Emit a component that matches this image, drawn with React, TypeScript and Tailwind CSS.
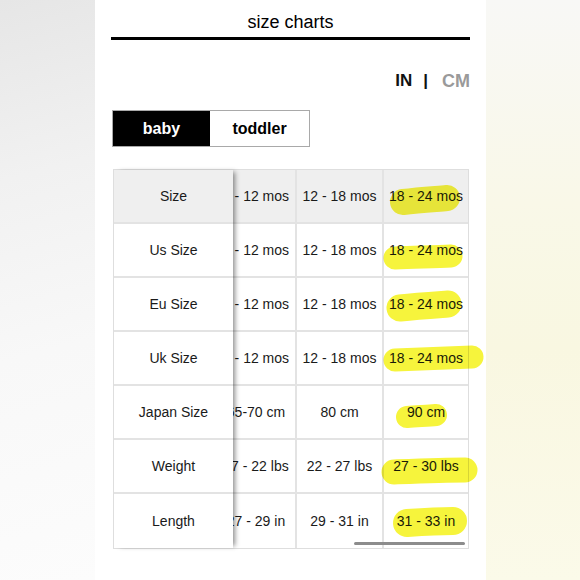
import React from 'react';

type Row = { label: string; cells: [string, string, string]; header?: boolean };

const rows: Row[] = [
  { label: 'Size', cells: ['6 - 12 mos', '12 - 18 mos', '18 - 24 mos'], header: true },
  { label: 'Us Size', cells: ['6 - 12 mos', '12 - 18 mos', '18 - 24 mos'] },
  { label: 'Eu Size', cells: ['6 - 12 mos', '12 - 18 mos', '18 - 24 mos'] },
  { label: 'Uk Size', cells: ['6 - 12 mos', '12 - 18 mos', '18 - 24 mos'] },
  { label: 'Japan Size', cells: ['65-70 cm', '80 cm', '90 cm'] },
  { label: 'Weight', cells: ['17 - 22 lbs', '22 - 27 lbs', '27 - 30 lbs'] },
  { label: 'Length', cells: ['27 - 29 in', '29 - 31 in', '31 - 33 in'] },
];

// marker strokes drawn over the screenshot
const marks = [
  { d: 'M403 202 C420 200 436 199 447 198', w: 26 },
  { d: 'M395 258 C415 257 435 257 451 256', w: 23 },
  { d: 'M400 308 C418 306 434 305 448 304', w: 27 },
  { d: 'M395 360 C425 359 450 358 472 357', w: 23 },
  { d: 'M407 417 C418 416 428 416 436 415', w: 22 },
  { d: 'M394 472 C420 471 445 470 465 470', w: 25 },
  { d: 'M407 523 C422 522 438 521 453 521', w: 28 },
];

export default function App() {
  const scrollRef = (el: HTMLDivElement | null) => {
    if (el) el.scrollLeft = el.scrollWidth;
  };

  return (
    <div className="relative flex h-[580px] w-[580px] overflow-hidden font-['Liberation_Sans',Arial,sans-serif] text-[#1a1a1a]">
      <div className="w-[95px] bg-[linear-gradient(165deg,#e6e6e6_0%,#f1f1f1_30%,#f8f8f8_60%,#fcfcfc_100%)]" />

      <div className="w-[391px] bg-white px-[16px]">
        <div className="pt-[12px] text-center text-[18px] leading-[21px] text-black">size charts</div>
        <div className="mt-[4px] h-[3px] bg-black" />

        <div className="mt-[31px] flex items-center justify-end text-[17px] font-bold leading-[20px]">
          <span className="text-[#111]">IN</span>
          <span className="ml-[11px] text-[#111]">|</span>
          <span className="ml-[14px] text-[18px] text-[#9a9a9a]">CM</span>
        </div>

        <div className="mt-[19px] ml-[1px] flex h-[37px] w-[198px] border border-[#a9a9a9] text-[16px] font-bold">
          <button className="flex w-[97px] items-center justify-center bg-black text-white">baby</button>
          <button className="flex flex-1 items-center justify-center bg-white text-black">toddler</button>
        </div>

        <div className="relative mt-[22px] ml-[2px] flex w-[356px] border border-[#dedede] text-[14px]">
          <div className="relative z-10 flex w-[119px] flex-col bg-white shadow-[4px_0_5px_-2px_rgba(0,0,0,0.45)]">
            {rows.map((r, i) => (
              <div
                key={r.label}
                className={`flex h-[54px] items-center justify-center ${r.header ? 'bg-[#efefef]' : 'bg-white'} ${i < rows.length - 1 ? 'border-b-2 border-[#e3e3e3]' : ''}`}
              >
                {r.label}
              </div>
            ))}
          </div>

          <div
            ref={scrollRef}
            className="flex-1 overflow-x-auto [scrollbar-width:none] [&::-webkit-scrollbar]:hidden"
          >
            <div className="flex w-max flex-col">
              {rows.map((r, i) => (
                <div
                  key={r.label}
                  className={`flex h-[54px] whitespace-nowrap ${r.header ? 'bg-[#efefef]' : 'bg-white'} ${i < rows.length - 1 ? 'border-b-2 border-[#e3e3e3]' : ''}`}
                >
                  <div className="flex w-[78px] items-center justify-center">{r.cells[0]}</div>
                  <div className="flex w-[87px] items-center justify-center border-l-2 border-[#e3e3e3]">{r.cells[1]}</div>
                  <div className="flex w-[86px] items-center justify-center border-l-2 border-[#e3e3e3]">{r.cells[2]}</div>
                </div>
              ))}
            </div>
          </div>

          <div className="absolute bottom-[3px] right-[3px] z-20 h-[3px] w-[111px] rounded-full bg-[#8c8c8c]" />
        </div>
      </div>

      <div className="flex-1 bg-[linear-gradient(180deg,#f8f8f6_0%,#f9f8e8_35%,#f9f7e1_60%,#fbfae9_100%)]" />

      <svg className="pointer-events-none absolute inset-0 mix-blend-multiply" width="580" height="580" viewBox="0 0 580 580">
        {marks.map((m, i) => (
          <path key={i} d={m.d} stroke="#f6f43c" strokeWidth={m.w} strokeLinecap="round" fill="none" />
        ))}
      </svg>
    </div>
  );
}
